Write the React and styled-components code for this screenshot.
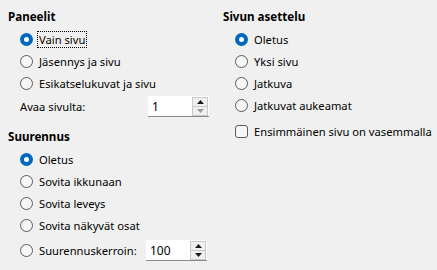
import styled, { createGlobalStyle } from "styled-components";

const GlobalStyle = createGlobalStyle`
  html, body {
    margin: 0;
    padding: 0;
    background: #f0f0f0;
  }
  body {
    font-family: "Noto Sans", "Liberation Sans", sans-serif;
    font-size: 11.2px;
    color: #000;
  }
`;

const Page = styled.div`
  display: grid;
  grid-template-columns: 215px 1fr;
  padding: 7px 0 0 8px;
  width: 437px;
  height: 270px;
  box-sizing: border-box;
`;

const Column = styled.div`
  display: flex;
  flex-direction: column;
`;

const Title = styled.div`
  font-weight: 700;
  font-size: 11.6px;
  height: 20px;
  line-height: 20px;
  margin-top: ${(p) => p.$top || 0}px;
  margin-bottom: 1px;
`;

const Row = styled.label`
  display: flex;
  align-items: center;
  height: 22px;
  padding-left: 12px;
  white-space: nowrap;
  margin-top: ${(p) => p.$top || 0}px;
`;

const Radio = styled.span`
  width: 13px;
  height: 13px;
  border-radius: 50%;
  box-sizing: border-box;
  flex-shrink: 0;
  border: ${(p) => (p.$checked ? "none" : "1px solid #5a5a5a")};
  background: ${(p) => (p.$checked ? "#0067c0" : "#f7f7f7")};
  display: flex;
  align-items: center;
  justify-content: center;
  &::after {
    content: "";
    display: ${(p) => (p.$checked ? "block" : "none")};
    width: 5px;
    height: 5px;
    border-radius: 50%;
    background: #fff;
  }
`;

const Check = styled.span`
  width: 13px;
  height: 13px;
  border-radius: 3px;
  box-sizing: border-box;
  flex-shrink: 0;
  border: 1px solid #5a5a5a;
  background: #f7f7f7;
`;

const Text = styled.span`
  margin-left: 4px;
  padding: 0 1px;
  line-height: 15px;
  border: 1px dotted ${(p) => (p.$focus ? "#000" : "transparent")};
`;

const Label = styled.span`
  width: 128px;
  flex-shrink: 0;
`;

const RadioLabel = styled(Text)`
  width: 105px;
  flex-shrink: 0;
`;

const Spin = styled.div`
  display: flex;
  width: 61px;
  height: 21px;
  box-sizing: border-box;
  background: #fff;
  border-bottom: 1px solid #8a8a8a;
  font-size: 12px;
`;

const SpinInput = styled.span`
  flex: 1;
  padding-left: 4px;
  line-height: 21px;
`;

const SpinButtons = styled.div`
  width: 16px;
  margin: 1px 1px 0 0;
  display: flex;
  flex-direction: column;
  border: 1px solid #c9c9c9;
  box-sizing: border-box;
  background: #f0f0f0;
`;

const SpinButton = styled.div`
  flex: 1;
  display: flex;
  align-items: center;
  justify-content: center;
  & + & {
    border-top: 1px solid #c9c9c9;
  }
`;

const Arrow = ({ up, dim }) => (
  <svg width="7" height="4" viewBox="0 0 7 4">
    <path
      d={up ? "M0 4 L3.5 0 L7 4 Z" : "M0 0 L3.5 4 L7 0 Z"}
      fill={dim ? "#9a9a9a" : "#1a1a1a"}
    />
  </svg>
);

const SpinBox = ({ value, downDim }) => (
  <Spin>
    <SpinInput>{value}</SpinInput>
    <SpinButtons>
      <SpinButton>
        <Arrow up />
      </SpinButton>
      <SpinButton>
        <Arrow dim={downDim} />
      </SpinButton>
    </SpinButtons>
  </Spin>
);

const RadioRow = ({ label, checked, focus, top }) => (
  <Row $top={top}>
    <Radio $checked={checked} />
    <Text $focus={focus}>{label}</Text>
  </Row>
);

export default function App() {
  return (
    <>
      <GlobalStyle />
      <Page>
        <Column>
          <Title>Paneelit</Title>
          <RadioRow label="Vain sivu" checked focus />
          <RadioRow label="Jäsennys ja sivu" />
          <RadioRow label="Esikatselukuvat ja sivu" />
          <Row $top={1}>
            <Label>Avaa sivulta:</Label>
            <SpinBox value="1" downDim />
          </Row>
          <Title $top={10}>Suurennus</Title>
          <RadioRow label="Oletus" checked />
          <RadioRow label="Sovita ikkunaan" />
          <RadioRow label="Sovita leveys" />
          <RadioRow label="Sovita näkyvät osat" />
          <Row $top={3}>
            <Radio />
            <RadioLabel>Suurennuskerroin:</RadioLabel>
            <SpinBox value="100" />
          </Row>
        </Column>
        <Column>
          <Title>Sivun asettelu</Title>
          <RadioRow label="Oletus" checked />
          <RadioRow label="Yksi sivu" />
          <RadioRow label="Jatkuva" />
          <RadioRow label="Jatkuvat aukeamat" />
          <Row $top={4}>
            <Check />
            <Text>Ensimmäinen sivu on vasemmalla</Text>
          </Row>
        </Column>
      </Page>
    </>
  );
}
